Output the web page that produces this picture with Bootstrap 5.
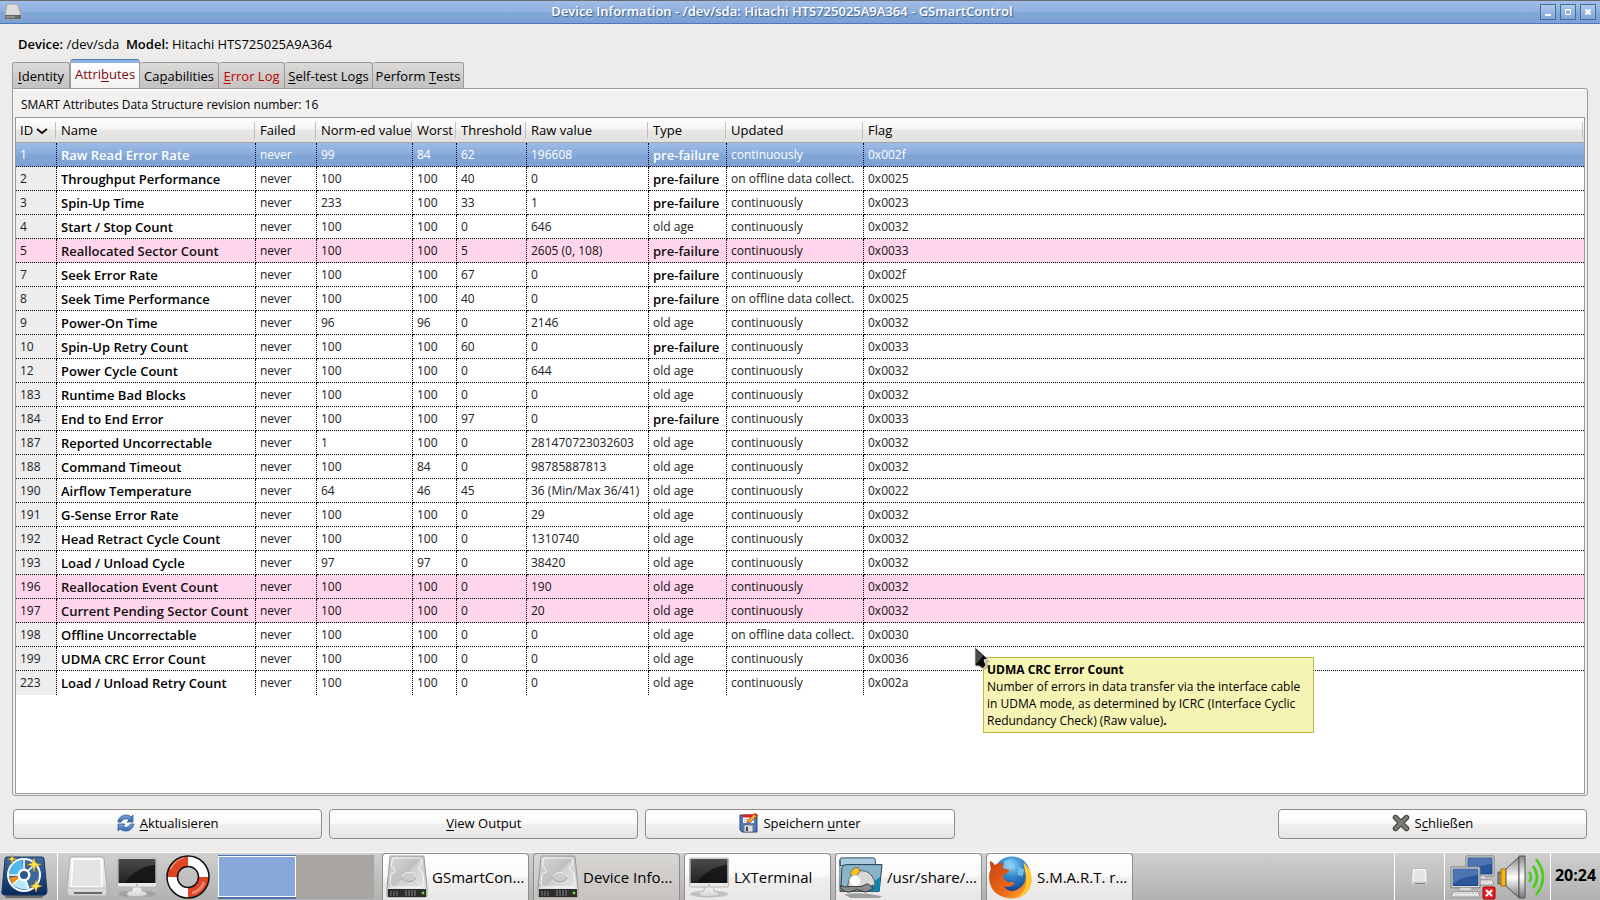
<!DOCTYPE html>
<html lang="de">
<head>
<meta charset="utf-8">
<meta name="viewport" content="width=device-width, initial-scale=1">
<title>Device Information - GSmartControl</title>
<link href="https://cdn.jsdelivr.net/npm/bootstrap@5.3.0/dist/css/bootstrap.min.css" rel="stylesheet">
<style>
  body { font: 12px/17px "Open Sans", "Noto Sans", sans-serif; color: #000; background: #edeceb; }
  u { text-underline-offset: 2px; }
  b { font-weight: 700; }
  strong { font-weight: 600; }
  button { color: #000; font: inherit; }
  svg { flex-shrink: 0; }

  .titlebar { height: 24px; border-top: 1px solid #6a6a6e; border-bottom: 1px solid #4a78b8; background: linear-gradient(#a0bde8, #8fb0de 48%, #80a8d8 52%, #7aa0d2); color: #fff; text-shadow: 1px 1px 1px #3d5f92; font-size: 13px; line-height: 20px; }
  .titlebar strong { padding-bottom: 2px; }
  .winbtn { width: 16px; height: 16px; border: 1px solid #456a9c; background: linear-gradient(#b0c9ec, #7fa5d8); padding: 0; line-height: 0; }

  .summary { padding: 12px 6px 6px; font-size: 13px; }
  .summary b { font-weight: 600; }
  .tabs button { height: 26px; border: 1px solid #9d9b99; border-bottom: 0; border-left-width: 0; background: linear-gradient(#dcdbda, #cfcecc 50%, #c4c2c1); border-radius: 3px 3px 0 0; padding: 2px 0 0; font-size: 13px; white-space: nowrap; }
  .tabs button:first-child { border-left-width: 1px; }
  .tabs .on { height: 30px; margin-bottom: -1px; border: 1px solid #9d9b99; border-top: 0; border-bottom: 0; background: linear-gradient(#4a78b8 1px, #8fb3e2 1px, #8fb3e2 4px, #fdfdfd 4px, #f2f1f0); color: #7e0c0c; position: relative; padding: 0; }
  .w57 { width: 58px; } .w66 { width: 66px; } .w71 { width: 70px; } .w79 { width: 79px; } .w88 { width: 88px; } .w91 { width: 91px; }

  .panel { border: 1px solid #9d9b99; border-radius: 0 3px 3px 3px; background: #f2f1f0; box-shadow: inset 0 1px #fff; padding: 0 2px 1px; }
  .revision { padding: 7px 6px 4px; }
  .listbox { border: 1px solid #9d9b99; background: #fff; }

  .attrs { table-layout: fixed; width: 100%; border-collapse: separate; border-spacing: 0; }
  .attrs th { height: 25px; padding: 0 0 0 4px; font-size: 13px; font-weight: 400; white-space: nowrap; border-bottom: 1px solid #a5a3a1; background: linear-gradient(#c2c0be, #c2c0be) right 1px top 4px / 1px 17px no-repeat, linear-gradient(#fff, #f3f2f1 48%, #e9e8e7 52%, #e1e0df); }
  .attrs td { height: 24px; padding: 0 0 0 4px; line-height: 16px; white-space: nowrap; color: #222; border-right: 1px dotted #000; border-bottom: 1px dotted #000; }
  .attrs td:last-child { border-right: 0; }
  .attrs tr:last-child td { border-bottom: 0; }
  .attrs td:nth-child(1) { background: #ededed; }
  .attrs td:nth-child(2), .attrs .pre { font-weight: 600; font-size: 13px; color: #000; }
  .attrs .warn td { background: #ffd5ec; color: #111; }
  .attrs .sel td { background: linear-gradient(#9dbbe6, #8aacdc 48%, #82a6d7 52%, #7a9fd0); color: #fff; }

  .tip { left: 970px; top: 568px; width: 331px; background: #f5f4b5; border: 1px solid #bdb947; padding: 3px; white-space: nowrap; }
  .pointer { left: 958px; top: 557px; }

  .actions { display: grid; grid-template-columns: repeat(5, 1fr); gap: 7px; padding: 13px 1px; }
  .actions button { height: 30px; display: flex; align-items: center; justify-content: center; gap: 5px; padding: 0 6px 2px; font-size: 13px; border: 1px solid #8f8d8b; border-radius: 4px; background: linear-gradient(#fff, #f9f9f8 48%, #f1f0ef 52%, #e6e5e4); }
  .actions button:last-child { grid-column: 5; }

  .taskbar { height: 48px; border-top: 1px solid #fff; background: linear-gradient(#cfcfcf, #b2b2b2); font-size: 15px; }
  .cell { height: 47px; border-right: 1px solid #fff; }
  .desk { width: 78px; height: 44px; background: #a9a5a1; padding: 0; border: 0; }
  .desk.cur { background: #86a9d9; border: solid #4a72ac; border-width: 1px 0 2px; box-shadow: inset 0 0 0 1px #fff; }
  .task { width: 147px; height: 47px; border: 1px solid #8f8d8b; border-bottom: 0; border-radius: 4px 4px 0 0; background: linear-gradient(#fff, #f9f9f8 48%, #f0efee 52%, #e8e7e6); padding: 0 3px; gap: 4px; text-align: left; white-space: nowrap; }
  .task.down { background: linear-gradient(#d8d6d4, #c6c2bf); }
  .clock { font-weight: 700; font-size: 16px; width: 49px; padding-bottom: 2px; }
</style>
</head>
<body class="d-flex flex-column vh-100 overflow-hidden">

<svg width="0" height="0" class="position-absolute" aria-hidden="true">
  <defs>
    <linearGradient id="metal" x1="0" y1="0" x2="1" y2="1"><stop offset="0" stop-color="#d8d8d8"/><stop offset=".5" stop-color="#bdbdbd"/><stop offset="1" stop-color="#e2e2e2"/></linearGradient>
    <linearGradient id="white" x1="0" y1="0" x2="0" y2="1"><stop offset="0" stop-color="#fafafa"/><stop offset="1" stop-color="#d5d5d8"/></linearGradient>
    <linearGradient id="dark" x1="0" y1="0" x2="0" y2="1"><stop offset="0" stop-color="#4a4c48"/><stop offset="1" stop-color="#222"/></linearGradient>
    <linearGradient id="navy" x1="0" y1="0" x2="0" y2="1"><stop offset="0" stop-color="#3f6c9f"/><stop offset="1" stop-color="#082a5c"/></linearGradient>
    <linearGradient id="sky" x1="0" y1="0" x2="0" y2="1"><stop offset="0" stop-color="#7fa7da"/><stop offset="1" stop-color="#3465a4"/></linearGradient>
    <linearGradient id="cone" x1="0" y1="0" x2="0" y2="1"><stop offset="0" stop-color="#888"/><stop offset=".5" stop-color="#fff"/><stop offset="1" stop-color="#777"/></linearGradient>
    <linearGradient id="fire" x1="0" y1="0" x2="1" y2="1"><stop offset="0" stop-color="#c8400d"/><stop offset=".6" stop-color="#ee6a18"/><stop offset="1" stop-color="#ffc12e"/></linearGradient>
    <radialGradient id="globe" cx=".5" cy=".25" r=".8"><stop offset="0" stop-color="#8fd6f5"/><stop offset=".4" stop-color="#2f86cf"/><stop offset="1" stop-color="#0d2f7c"/></radialGradient>
  </defs>
  <symbol id="hdd" viewBox="0 0 42 44">
    <path d="M5 1h32q1 0 1 1l3 30v9q0 1-1 1H2q-1 0-1-1v-9L4 2q0-1 1-1z" fill="url(#metal)" stroke="#999"/>
    <path d="M7 3h27l2 2-1 5-3 2 2 4 3 3 1 9q0 4-4 4H8q-4 0-4-4l1-9 4-2-1-4-3-2z" fill="none" stroke="#f5f5f5"/>
    <path d="M37 2 16 24l-8 8h31z" fill="#fff" opacity=".3"/>
    <ellipse cx="23" cy="22" rx="7" ry="4.500" fill="#ccc" stroke="#eee"/><path d="M16 22a7 4.500 0 0 0 14 0" fill="none" stroke="#999"/>
    <path d="M2 34h38v8H2z" fill="#2c2c2c"/><path d="M2 33h38" stroke="#fff"/>
    <path d="M5 36v5M8 36v5M11 36v5" stroke="#777"/><path d="M20 35v6M23 35v6M26 35v6M29 35v6" stroke="#888"/><circle cx="37" cy="38" r="1.400" fill="#6fe02b"/>
  </symbol>
  <symbol id="screen" viewBox="0 0 42 42">
    <ellipse cx="21" cy="38" rx="19" ry="3.500" fill="#888" opacity=".4"/>
    <path d="M17 28h8l1 7q5 1 5 3t-10 2.500-10-2.500 5-3z" fill="url(#white)" stroke="#bbb"/>
    <rect x="1.500" y="2" width="39" height="29" rx="1.500" fill="#e8e8e8" stroke="#b5b5b5"/><rect x="2.500" y="3" width="37" height="24" fill="url(#dark)"/>
    <path d="M8 27Q22 10 39 9v18z" fill="#111" opacity=".8"/><path d="M20 29h2" stroke="#999"/>
  </symbol>
  <symbol id="drive" viewBox="0 0 42 42">
    <path d="M6 1h30q2 0 2 2l3 29v5q0 3-2 3H3q-2 0-2-3v-5L4 3q0-2 2-2z" fill="url(#white)" stroke="#aaa"/>
    <path d="M7 3h28l1 28H5z" fill="#e4e4e7" stroke="#fff" stroke-width="1.500"/>
    <path d="M2 32h38" stroke="#bbb"/><path d="M8 37h28" stroke="#444" stroke-width="1.500"/>
  </symbol>
  <symbol id="pc" viewBox="0 0 30 32">
    <rect x="1" y="1" width="28" height="20" rx="1" fill="#f4f4f4" stroke="#777"/><rect x="3" y="3" width="24" height="16" fill="#2a569b" stroke="#173d78"/><path d="M3 17Q12 10 27 9V3H3z" fill="#6e93c9" opacity=".5"/>
    <path d="M10 21h10l2 3H8z" fill="#ddd" stroke="#999" stroke-width=".6"/><path d="M3 25h24l2 5H1z" fill="#f5f5f5" stroke="#888" stroke-width=".8"/><path d="M4 27h22M3 29h24" stroke="#aaa" stroke-dasharray="1.500 1"/>
  </symbol>
</svg>

<header class="titlebar d-flex align-items-center flex-shrink-0">
  <svg width="24" height="18" viewBox="0 0 24 18"><path d="M7 1h11l3 11v4H5v-4z" fill="#d2d2d2" stroke="#a5a5a5"/><path d="M8 2h9l2 9H6z" fill="#dcdcdc"/><path d="M5 12h16v4H5z" fill="#666"/><path d="M6 14h9" stroke="#bbb"/></svg>
  <strong class="flex-grow-1 text-center">Device Information - /dev/sda: Hitachi HTS725025A9A364 - GSmartControl</strong>
  <div class="d-flex gap-1 pe-1">
    <button class="winbtn" aria-label="Minimize"><svg width="14" height="14"><path d="M4 9h6v2H4z" fill="#fff"/></svg></button>
    <button class="winbtn" aria-label="Maximize"><svg width="14" height="14"><path d="M4.500 4.500h5v5h-5zM4 5h6" fill="none" stroke="#fff"/></svg></button>
    <button class="winbtn" aria-label="Close"><svg width="14" height="14"><path d="m4.500 4.500 5 5m0-5-5 5" stroke="#fff" stroke-width="2.200"/></svg></button>
  </div>
</header>

<main class="flex-grow-1 d-flex flex-column px-2 mx-1">
  <div class="summary"><b>Device:</b> /dev/sda&nbsp; <b>Model:</b> Hitachi HTS725025A9A364</div>

  <div class="tabs d-flex align-items-end" role="tablist">
    <button role="tab" class="w57"><u>I</u>dentity</button>
    <button role="tab" class="w71 on" aria-selected="true">Attri<u>b</u>utes</button>
    <button role="tab" class="w79">Ca<u>p</u>abilities</button>
    <button role="tab" class="w66" style="color:#c00000"><u>E</u>rror Log</button>
    <button role="tab" class="w88"><u>S</u>elf-test Logs</button>
    <button role="tab" class="w91">Perform <u>T</u>ests</button>
  </div>

  <section class="panel flex-grow-1 d-flex flex-column position-relative">
    <div class="revision">SMART Attributes Data Structure revision number: 16</div>
    <div class="listbox flex-grow-1">
      <table class="attrs">
        <colgroup><col style="width:41px"><col style="width:199px"><col style="width:61px"><col style="width:96px"><col style="width:44px"><col style="width:70px"><col style="width:122px"><col style="width:78px"><col style="width:137px"><col></colgroup>
        <thead><tr><th>ID <svg width="12" height="8" viewBox="0 0 12 8"><path d="m1 2 5 4 5-4" fill="none" stroke="#111" stroke-width="1.800"/></svg></th><th>Name</th><th>Failed</th><th>Norm-ed value</th><th>Worst</th><th>Threshold</th><th>Raw value</th><th>Type</th><th>Updated</th><th>Flag</th></tr></thead>
        <tbody>
          <tr class="sel"><td>1</td><td>Raw Read Error Rate</td><td>never</td><td>99</td><td>84</td><td>62</td><td>196608</td><td class="pre">pre-failure</td><td>continuously</td><td>0x002f</td></tr>
          <tr><td>2</td><td>Throughput Performance</td><td>never</td><td>100</td><td>100</td><td>40</td><td>0</td><td class="pre">pre-failure</td><td>on offline data collect.</td><td>0x0025</td></tr>
          <tr><td>3</td><td>Spin-Up Time</td><td>never</td><td>233</td><td>100</td><td>33</td><td>1</td><td class="pre">pre-failure</td><td>continuously</td><td>0x0023</td></tr>
          <tr><td>4</td><td>Start / Stop Count</td><td>never</td><td>100</td><td>100</td><td>0</td><td>646</td><td>old age</td><td>continuously</td><td>0x0032</td></tr>
          <tr class="warn"><td>5</td><td>Reallocated Sector Count</td><td>never</td><td>100</td><td>100</td><td>5</td><td>2605 (0, 108)</td><td class="pre">pre-failure</td><td>continuously</td><td>0x0033</td></tr>
          <tr><td>7</td><td>Seek Error Rate</td><td>never</td><td>100</td><td>100</td><td>67</td><td>0</td><td class="pre">pre-failure</td><td>continuously</td><td>0x002f</td></tr>
          <tr><td>8</td><td>Seek Time Performance</td><td>never</td><td>100</td><td>100</td><td>40</td><td>0</td><td class="pre">pre-failure</td><td>on offline data collect.</td><td>0x0025</td></tr>
          <tr><td>9</td><td>Power-On Time</td><td>never</td><td>96</td><td>96</td><td>0</td><td>2146</td><td>old age</td><td>continuously</td><td>0x0032</td></tr>
          <tr><td>10</td><td>Spin-Up Retry Count</td><td>never</td><td>100</td><td>100</td><td>60</td><td>0</td><td class="pre">pre-failure</td><td>continuously</td><td>0x0033</td></tr>
          <tr><td>12</td><td>Power Cycle Count</td><td>never</td><td>100</td><td>100</td><td>0</td><td>644</td><td>old age</td><td>continuously</td><td>0x0032</td></tr>
          <tr><td>183</td><td>Runtime Bad Blocks</td><td>never</td><td>100</td><td>100</td><td>0</td><td>0</td><td>old age</td><td>continuously</td><td>0x0032</td></tr>
          <tr><td>184</td><td>End to End Error</td><td>never</td><td>100</td><td>100</td><td>97</td><td>0</td><td class="pre">pre-failure</td><td>continuously</td><td>0x0033</td></tr>
          <tr><td>187</td><td>Reported Uncorrectable</td><td>never</td><td>1</td><td>100</td><td>0</td><td>281470723032603</td><td>old age</td><td>continuously</td><td>0x0032</td></tr>
          <tr><td>188</td><td>Command Timeout</td><td>never</td><td>100</td><td>84</td><td>0</td><td>98785887813</td><td>old age</td><td>continuously</td><td>0x0032</td></tr>
          <tr><td>190</td><td>Airflow Temperature</td><td>never</td><td>64</td><td>46</td><td>45</td><td>36 (Min/Max 36/41)</td><td>old age</td><td>continuously</td><td>0x0022</td></tr>
          <tr><td>191</td><td>G-Sense Error Rate</td><td>never</td><td>100</td><td>100</td><td>0</td><td>29</td><td>old age</td><td>continuously</td><td>0x0032</td></tr>
          <tr><td>192</td><td>Head Retract Cycle Count</td><td>never</td><td>100</td><td>100</td><td>0</td><td>1310740</td><td>old age</td><td>continuously</td><td>0x0032</td></tr>
          <tr><td>193</td><td>Load / Unload Cycle</td><td>never</td><td>97</td><td>97</td><td>0</td><td>38420</td><td>old age</td><td>continuously</td><td>0x0032</td></tr>
          <tr class="warn"><td>196</td><td>Reallocation Event Count</td><td>never</td><td>100</td><td>100</td><td>0</td><td>190</td><td>old age</td><td>continuously</td><td>0x0032</td></tr>
          <tr class="warn"><td>197</td><td>Current Pending Sector Count</td><td>never</td><td>100</td><td>100</td><td>0</td><td>20</td><td>old age</td><td>continuously</td><td>0x0032</td></tr>
          <tr><td>198</td><td>Offline Uncorrectable</td><td>never</td><td>100</td><td>100</td><td>0</td><td>0</td><td>old age</td><td>on offline data collect.</td><td>0x0030</td></tr>
          <tr><td>199</td><td>UDMA CRC Error Count</td><td>never</td><td>100</td><td>100</td><td>0</td><td>0</td><td>old age</td><td>continuously</td><td>0x0036</td></tr>
          <tr><td>223</td><td>Load / Unload Retry Count</td><td>never</td><td>100</td><td>100</td><td>0</td><td>0</td><td>old age</td><td>continuously</td><td>0x002a</td></tr>
        </tbody>
      </table>
    </div>
    <div class="tip position-absolute" role="tooltip"><b>UDMA CRC Error Count</b><br>Number of errors in data transfer via the interface cable<br>in UDMA mode, as determined by ICRC (Interface Cyclic<br>Redundancy Check) (Raw value)<b>.</b></div>
    <svg class="pointer position-absolute" width="22" height="28" viewBox="0 0 22 28"><path d="m5 4 14 12-3 1 2 4-5 3-3-3H4z" fill="#000" opacity=".25"/><path d="m4 1 13 12-4 1 2 5-3 4-4-3H4z" fill="#0a0a0a" stroke="#eee"/><path d="m5 3 7 7-7 8z" fill="#777" opacity=".6"/></svg>
  </section>

  <div class="actions">
    <button><svg width="18" height="18" viewBox="0 0 18 18"><g fill="url(#sky)" stroke="#2d5a99" stroke-width=".8"><path d="M1 7Q3 1 9 1q4 0 5 2l2-2v7h-6l2-2q-2-2-5-1Q5 6 4 8H1z"/><path d="M17 10q-2 7-8 7-4 0-6-2l-2 2V10h7l-2 2q2 2 5 1 2-1 2.500-3z"/></g></svg><span><u>A</u>ktualisieren</span></button>
    <button><span><u>V</u>iew Output</span></button>
    <button><svg width="19" height="20" viewBox="0 0 19 20"><path d="M1 2h17v17H3l-2-2z" fill="#4a79bd" stroke="#244b87"/><path d="M4 2h11v8H4z" fill="#fff"/><path d="M4 1.500h11v3H4z" fill="#e01b1b"/><path d="M5 6.500h8M5 8.500h8" stroke="#bbb"/><path d="M5 12h9v7H5z" fill="#ddd" stroke="#777"/><path d="M7 14h2v4H7z" fill="#345"/><path d="m8 10 1-3 6-6 3 2-6 6z" fill="#f2a33c" stroke="#8a4a10" stroke-width=".8"/><path d="m15 1 1-1 3 2-1 1.500z" fill="#d22"/></svg><span>Speichern <u>u</u>nter</span></button>
    <button><svg width="18" height="18" viewBox="0 0 18 18"><path d="m3.500 3.500 11 11m0-11-11 11" stroke="#3c403a" stroke-width="5.400" stroke-linecap="round"/><path d="m3.500 3.500 11 11m0-11-11 11" stroke="#777c75" stroke-width="3.400" stroke-linecap="round"/></svg><span>S<u>c</u>hließen</span></button>
  </div>
</main>

<footer class="taskbar d-flex align-items-center flex-shrink-0">
  <div class="cell d-flex align-items-center pe-2 me-2">
    <svg width="49" height="46" viewBox="0 0 49 46"><path d="M6 39 45 40l-3 4H5z" fill="#222" opacity=".5"/><path d="M7 3h35q2 0 2 2l3 32q0 4-3 4H5q-4 0-3-4L5 5q0-2 2-2z" fill="url(#navy)" stroke="#123763"/>
      <circle cx="24" cy="21" r="17" fill="#fff"/><circle cx="24" cy="21" r="15" fill="#3c6798"/><path d="M24 21 9 20A15 15 0 0 1 22 6z" fill="#4fb9ee"/><path d="m24 21-11 10q5 5 16 4z" fill="#b9e7fb"/><path d="M24 21 9 24l3 6z" fill="#f28a1c"/><path d="M9 21h9M12 31l7-6M29 35l-3-8M24 6v9M35 10l-7 7" stroke="#fff" stroke-width="1.600"/><circle cx="24" cy="21" r="6.500" fill="#fff"/><circle cx="24" cy="21" r="4" fill="#2d588e"/>
      <g fill="#ffe94a" stroke="#c98b12" stroke-width=".6"><path d="m34 4 1.500 5L41 10.500 35.500 12 34 18l-1.500-6-5.500-1.500L32.500 9z"/><path d="m36 26 1.500 4.500L42 32l-4.500 1.500L36 38l-1.500-4.500L30 32l4.500-1.500z"/><path d="m12 1 1 3 3.500 1L13 6l-1 4-1-4-3-1 3-1z"/></g></svg>
  </div>
  <div class="d-flex align-items-center gap-2">
    <svg width="42" height="42"><use href="#drive"/></svg>
    <svg width="42" height="42"><use href="#screen"/></svg>
    <svg width="44" height="44" viewBox="1 1 44 44"><circle cx="23" cy="23" r="15.500" fill="none" stroke="#fff" stroke-width="11"/><path d="M7.500 23A15.500 15.500 0 0 1 23 7.500M38.500 23A15.500 15.500 0 0 1 23 38.500" fill="none" stroke="#df4423" stroke-width="11"/><path d="M5 15Q9 5 19 3M27 39q9-2 12-11" fill="none" stroke="#fff" opacity=".35" stroke-width="3"/><g fill="none" stroke="#111" stroke-width="1.500"><circle cx="23" cy="23" r="21"/><circle cx="23" cy="23" r="10.500"/></g></svg>
    <div class="d-flex"><button class="desk cur" aria-label="Desktop 1"></button><button class="desk" aria-label="Desktop 2"></button></div>
  </div>
  <div class="d-flex gap-1 ms-2 align-self-end">
    <button class="task d-flex align-items-center"><svg width="42" height="44"><use href="#hdd"/></svg><span>GSmartCon...</span></button>
    <button class="task down d-flex align-items-center"><svg width="42" height="44"><use href="#hdd"/></svg><span>Device Info...</span></button>
    <button class="task d-flex align-items-center"><svg width="42" height="42"><use href="#screen"/></svg><span>LXTerminal</span></button>
    <button class="task d-flex align-items-center"><svg width="44" height="44" viewBox="0 0 46 44"><path d="M5 40q20-3 40 2l-3 2H12z" fill="#333" opacity=".4"/><path d="M1 4q0-2 2-2h33q2 0 2 3v5H1z" fill="#a9cbdd" stroke="#2a4c60"/><path d="M1 4v33h2" fill="none" stroke="#2a4c60"/><path d="M3 12q1-3 5-3h37l-3 28H2z" fill="#86b4cb" stroke="#1d3b4c"/><path d="M28 37q0-6 6-9l9-6-1 15z" fill="#0a86b4"/><path d="M9 31q1-8 6-14 7-3 13-1 8 3 10 14l-10 3-11 2z" fill="#d8d8d8" stroke="#555"/><path d="M12 18q2-6 8-6l2 4-3 4-6 1z" fill="#f5c71a" stroke="#866"/><circle cx="17" cy="26" r="6" fill="#fff" stroke="#ccc"/><path d="M1 31q6 2 12 1l10 0 7-3 6 5-8 4-9-3-9 3q-7-1-9-7z" fill="#8b8b8b" stroke="#333"/></svg><span>/usr/share/...</span></button>
    <button class="task d-flex align-items-center ps-0"><svg width="46" height="45" viewBox="0 0 48 46"><circle cx="26" cy="20" r="19" fill="url(#globe)"/><path d="M18 6q5-3 9-1l-3 4 4 3-5 4-6-2zM33 12l6 3-2 7-5-2z" fill="#8fd0ee" opacity=".7"/><path d="M3 6q3 0 5 4 4-3 9-2l-1 5 7 2q1 3-6 5-1 4 5 8 6-1 7 1-4 5-12 3 8 9 17 2 8-5 6-17l-2-8q8 8 8 17-1 17-19 19Q7 44 3 29 1 20 4 14 3 9 3 6z" fill="url(#fire)"/><path d="M38 7q9 8 9 19-2 14-15 18 10-8 9-21z" fill="#ffc935"/></svg><span>S.M.A.R.T. r...</span></button>
  </div>
  <div class="ms-auto cell"></div>
  <div class="cell d-flex align-items-center px-3"><svg width="17" height="20"><use href="#drive"/></svg></div>
  <div class="cell d-flex align-items-center px-1">
    <svg width="48" height="46" viewBox="0 0 48 46"><use href="#pc" x="16" y="1" width="30" height="32"/><use href="#pc" x="1" y="12" width="31" height="33"/><rect x="34" y="33" width="12" height="12" rx="1" fill="#e8202a" stroke="#a40000"/><path d="m37 36 6 6m0-6-6 6" stroke="#fff" stroke-width="2"/></svg>
    <svg width="49" height="46" viewBox="0 0 49 46"><path d="M1 18h5v12H1z" fill="#888" stroke="#555"/><path d="M4 15h6v17H4z" fill="#f6b40c" stroke="#a0700a"/><path d="M9 15 22 3v41L9 32z" fill="url(#cone)" stroke="#555"/><path d="M22 2h6v42h-6z" fill="url(#cone)" stroke="#555"/><g fill="none" stroke="#46cf12" stroke-width="2.600"><path d="M32 18q4 5 0 10"/><path d="M36 12q8 11 0 22"/><path d="M39 5q14 18 0 36"/></g></svg>
  </div>
  <div class="clock text-center">20:24</div>
</footer>

<script src="https://cdn.jsdelivr.net/npm/bootstrap@5.3.0/dist/js/bootstrap.bundle.min.js"></script>
</body>
</html>
